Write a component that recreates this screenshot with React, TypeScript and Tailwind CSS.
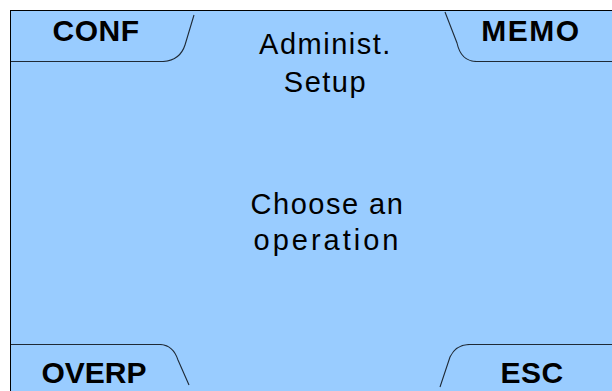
const sans = { fontFamily: '"Liberation Sans", Arial, sans-serif' };

function Tab({
  label,
  width,
  height,
  path,
  textClass,
}: {
  label: string;
  width: number;
  height: number;
  path: string;
  textClass: string;
}) {
  return (
    <div className="relative shrink-0" style={{ width, height }}>
      <svg className="absolute inset-0" width={width} height={height} fill="none">
        <path d={path} stroke="#1f2a36" strokeWidth="1.1" />
      </svg>
      <div className={`relative text-[30px] leading-[30px] font-bold tracking-[0.5px] text-black ${textClass}`}>
        {label}
      </div>
    </div>
  );
}

export default function App() {
  return (
    <div className="h-[391px] w-[612px] overflow-hidden bg-white pl-[10px] pt-[10px]" style={sans}>
      <div className="flex h-[381px] flex-col border-l border-t border-black bg-[#99ccff]">
        <div className="flex items-start">
          <Tab
            label="CONF"
            width={190}
            height={51}
            path="M0 50.5 H152 Q169 49.5 174 34 L183 4"
            textClass="w-[170px] pt-[5px] text-center"
          />
          <div className="flex-1 pl-[10px] pt-[14px] text-center text-[29px] leading-[38px] tracking-[1.5px] text-black">
            <div>Administ.</div>
            <div>Setup</div>
          </div>
          <Tab
            label="MEMO"
            width={172}
            height={51}
            path="M5 1 L17 32 Q21 50.5 37 50.5 H172"
            textClass="w-[172px] pl-[10px] pt-[5px] text-center tracking-[1.5px]"
          />
        </div>

        <div className="mt-[85px] pl-[32px] text-center text-[29px] leading-[36px] tracking-[1.5px] text-black">
          <div>Choose an</div>
          <div className="tracking-[3px]">operation</div>
        </div>

        <div className="mt-auto flex items-start justify-between">
          <Tab
            label="OVERP"
            width={190}
            height={47}
            path="M0 0.5 H149 Q162 1 167 16 L178 41"
            textClass="w-[166px] pt-[14px] text-center tracking-[0px]"
          />
          <Tab
            label="ESC"
            width={182}
            height={47}
            path="M10 43 L20 13 Q26 0.5 40 0.5 H182"
            textClass="w-[182px] pl-[22px] pt-[14px] text-center"
          />
        </div>
      </div>
    </div>
  );
}
